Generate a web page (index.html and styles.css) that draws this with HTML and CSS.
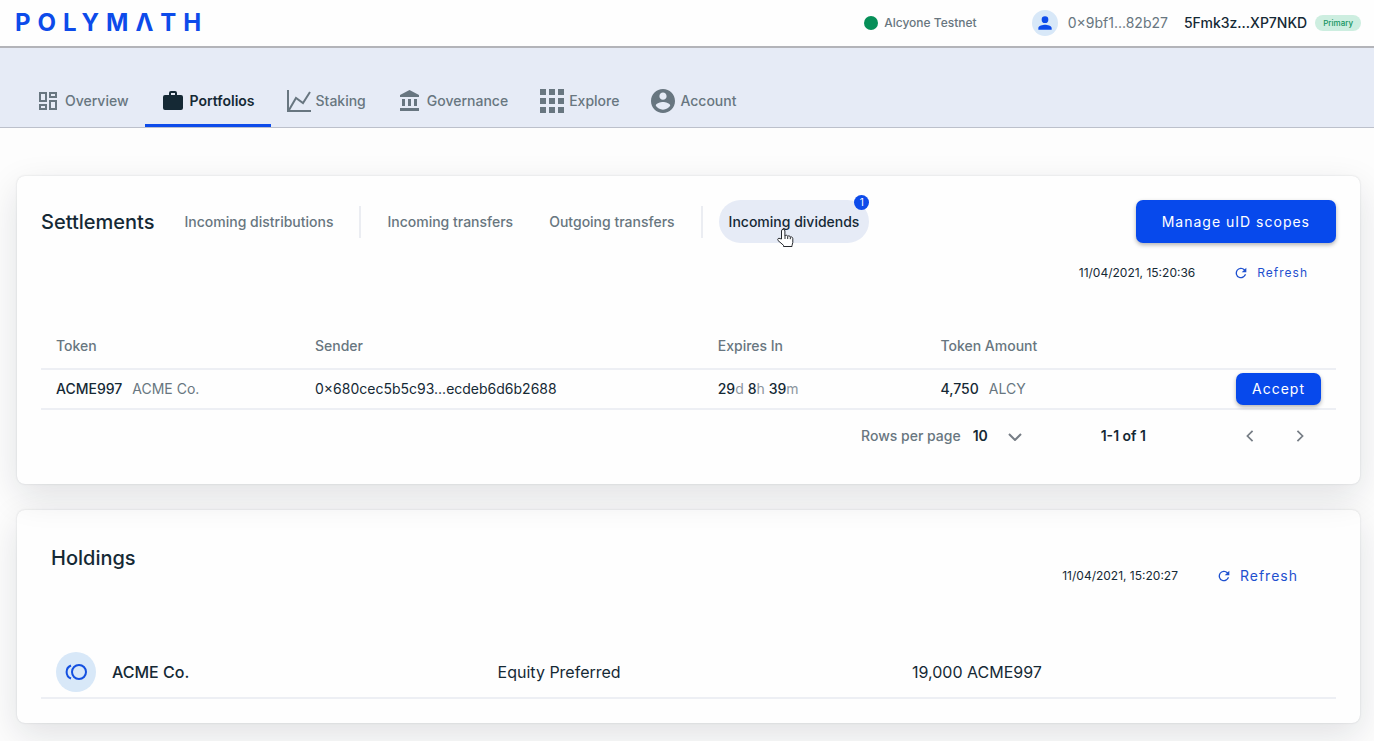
FILE: index.html
```html
<!DOCTYPE html>
<html lang="en">
<head>
<meta charset="utf-8">
<title>Polymath - Portfolios</title>
<link rel="stylesheet" href="styles.css">
</head>
<body>
<header class="topbar">
  <a class="logo" href="#" aria-label="Polymath">POLYMΛTH</a>
  <div class="network"><span class="network-dot"></span>Alcyone Testnet</div>
  <div class="identity">
    <span class="avatar"><svg viewBox="0 0 24 24" width="20" height="20"><path d="M12 4a4 4 0 1 0 0 8 4 4 0 0 0 0-8zm0 10c-2.700 0-8 1.300-8 4v2h16v-2c0-2.700-5.300-4-8-4z"/></svg></span>
    <span class="did">0×9bf1...82b27</span>
    <span class="key">5Fmk3z...XP7NKD</span>
    <span class="badge">Primary</span>
  </div>
</header>

<nav class="nav">
  <a class="nav-item" href="#"><svg viewBox="0 0 24 24"><path d="M19 5v2h-4V5h4M9 5v6H5V5h4m10 8v6h-4v-6h4M9 17v2H5v-2h4M21 3h-8v6h8V3M11 3H3v10h8V3m10 8h-8v10h8V11m-10 4H3v6h8v-6z"/></svg>Overview</a>
  <a class="nav-item active" href="#" aria-current="page"><svg viewBox="0 0 24 24"><path d="M10 2h4a2 2 0 0 1 2 2v2h4a2 2 0 0 1 2 2v11a2 2 0 0 1-2 2H4a2 2 0 0 1-2-2V8a2 2 0 0 1 2-2h4V4a2 2 0 0 1 2-2m4 4V4h-4v2h4z"/></svg>Portfolios</a>
  <a class="nav-item" href="#"><svg viewBox="0 0 24 24"><path class="stroke" d="M1 1v21h23M2 21l7-12 7 5L23 3"/></svg>Staking</a>
  <a class="nav-item" href="#"><svg viewBox="0 0 24 24"><path d="M11.500 1L2 6v2h19V6m-5 4v7h3v-7M2 22h19v-3H2m8-9v7h3v-7m-9 0v7h3v-7H4z"/></svg>Governance</a>
  <a class="nav-item" href="#"><svg viewBox="0 0 24 24"><path d="M0 0h6v6H0zM9 0h6v6H9zM18 0h6v6h-6zM0 9h6v6H0zM9 9h6v6H9zM18 9h6v6h-6zM0 18h6v6H0zM9 18h6v6H9zM18 18h6v6h-6z"/></svg>Explore</a>
  <a class="nav-item" href="#"><svg viewBox="2 2 20 20"><path d="M12 2C6.480 2 2 6.480 2 12s4.480 10 10 10 10-4.480 10-10S17.520 2 12 2zm0 3c1.660 0 3 1.340 3 3s-1.340 3-3 3-3-1.340-3-3 1.340-3 3-3zm0 14.200c-2.500 0-4.710-1.280-6-3.220.030-1.990 4-3.080 6-3.080 1.990 0 5.970 1.090 6 3.080-1.290 1.940-3.500 3.220-6 3.220z"/></svg>Account</a>
</nav>

<main class="content">
  <section class="card card-raised">
    <div class="card-head">
      <h2 class="title">Settlements</h2>
      <button class="tab" type="button">Incoming distributions</button>
      <span class="divider"></span>
      <button class="tab" type="button">Incoming transfers</button>
      <button class="tab" type="button">Outgoing transfers</button>
      <span class="divider"></span>
      <button class="tab selected" type="button">Incoming dividends<span class="count">1</span>
        <svg class="pointer" viewBox="0 0 18 20" width="18" height="20"><path d="M5.500 11V3a1.700 1.700 0 0 1 3.400 0v5c.400-1.200 2.600-1 2.800.400.600-1 2.400-.600 2.600.700 1-.600 2.500 0 2.500 1.500v3.900c0 1.200-.800 2-.800 3.200v.800H7.500v-1.200L2 12.500c-1-1.400.700-3 2-1.900z"/><path d="M9 8v3M11.700 8.500v2.500M14.300 9.200v2"/></svg>
      </button>
      <button class="primary large" type="button">Manage uID scopes</button>
    </div>
    <div class="status">
      <time>11/04/2021, 15:20:36</time>
      <button class="refresh small" type="button"><svg viewBox="0 0 24 24"><path d="M17.650 6.350A8 8 0 1 0 19.730 14h-2.080A6 6 0 1 1 12 6c1.660 0 3.140.690 4.220 1.780L13 11h7V4l-2.350 2.350z"/></svg>Refresh</button>
    </div>
    <table class="settlements">
      <thead>
        <tr><th class="col-token">Token</th><th class="col-sender">Sender</th><th class="col-expires">Expires In</th><th>Token Amount</th><td></td></tr>
      </thead>
      <tbody>
        <tr>
          <td><b>ACME997</b><span class="muted spaced">ACME Co.</span></td>
          <td>0×680cec5b5c93...ecdeb6d6b2688</td>
          <td><b>29</b><span class="unit">d</span> <b>8</b><span class="unit">h</span> <b>39</b><span class="unit">m</span></td>
          <td><b>4,750</b><span class="muted spaced">ALCY</span></td>
          <td class="action"><button class="primary" type="button">Accept</button></td>
        </tr>
      </tbody>
    </table>
    <div class="pager">
      <label for="rows">Rows per page</label>
      <span class="select"><select id="rows"><option>10</option><option>20</option></select><svg viewBox="0 0 14 8" width="14" height="8"><path d="M1 1l6 6 6-6"/></svg></span>
      <span class="range">1-1 of 1</span>
      <button class="arrow" type="button" aria-label="Previous page"><svg viewBox="0 0 8 14" width="8" height="12"><path d="M7 1L1 7l6 6"/></svg></button>
      <button class="arrow" type="button" aria-label="Next page"><svg viewBox="0 0 8 14" width="8" height="12"><path d="M1 1l6 6-6 6"/></svg></button>
    </div>
  </section>

  <section class="card">
    <div class="holdings-head">
      <h2>Holdings</h2>
      <div class="status">
        <time>11/04/2021, 15:20:27</time>
        <button class="refresh" type="button"><svg viewBox="0 0 24 24"><path d="M17.650 6.350A8 8 0 1 0 19.730 14h-2.080A6 6 0 1 1 12 6c1.660 0 3.140.690 4.220 1.780L13 11h7V4l-2.350 2.350z"/></svg>Refresh</button>
      </div>
    </div>
    <table class="holdings">
      <tbody>
        <tr>
          <td class="col-name"><div class="asset"><span class="coin"><svg viewBox="0 0 24 18" width="24" height="18"><circle cx="15" cy="9" r="7"/><path d="M7 2.500a7 7 0 0 0 0 13"/></svg></span><b>ACME Co.</b></div></td>
          <td class="col-type">Equity Preferred</td>
          <td>19,000 ACME997</td>
        </tr>
      </tbody>
    </table>
  </section>
</main>
</body>
</html>
```
FILE: styles.css
```css
* { box-sizing: border-box; }
body {
  margin: 0;
  background: #fdfdfd;
  color: #152935;
  font: 14px/20px Inter, "Liberation Sans", sans-serif;
}
h2 { margin: 0; font-size: 20px; line-height: 28px; font-weight: 500; }
b { font-weight: 500; }
button, select { font: inherit; color: inherit; border: 0; background: none; padding: 0; margin: 0; }
button { cursor: pointer; }
a { text-decoration: none; }
svg { display: block; flex: none; }

.topbar {
  display: flex;
  align-items: center;
  height: 48px;
  padding: 0 13px 0 15px;
  border-bottom: 2px solid #b3b4b9;
  background: #fefefe;
}
.logo { font-size: 24px; line-height: 28px; font-weight: 700; letter-spacing: 7px; color: #0d4bea; margin-right: auto; }
.network { display: flex; align-items: center; gap: 6px; font-size: 12px; font-weight: 500; color: #687680; margin-right: 55px; }
.network-dot { width: 14px; height: 14px; border-radius: 50%; background: #068f58; }
.identity { display: flex; align-items: center; }
.avatar { display: grid; place-items: center; width: 26px; height: 26px; border-radius: 50%; background: #d8e8f8; margin-right: 10px; }
.avatar svg { width: 20px; height: 20px; fill: #0d4bea; }
.did { color: #687680; margin-right: 16px; }
.key { font-weight: 500; margin-right: 8px; }
.badge { padding: 0 8px; border-radius: 8px; background: #cdeee0; color: #14945f; font-size: 8px; line-height: 16px; font-weight: 500; }

.nav { display: flex; height: 80px; padding: 0 20px; background: #e6ebf6; border-bottom: 1px solid #bcc0cb; }
.nav-item { display: flex; align-items: center; gap: 5px; padding: 30px 16px 0; border-bottom: 3px solid transparent; color: #687680; font-weight: 500; }
.nav-item svg { width: 24px; height: 24px; fill: currentColor; }
.nav-item .stroke { fill: none; stroke: currentColor; stroke-width: 2; }
.nav-item.active { color: #152935; border-color: #0d4bea; font-weight: 600; }

.content { display: flex; flex-direction: column; gap: 26px; padding: 48px 14px 20px 17px; overflow: hidden; }
.card {
  padding: 24px;
  border-radius: 8px;
  background: #fefefe;
  box-shadow: 0 0 2px rgba(20, 25, 40, .16), 0 12px 36px rgba(20, 25, 40, .12);
}
.card-raised { position: relative; z-index: 1; }
.card-head { display: flex; align-items: center; gap: 16px; }
.title { margin-right: 4px; }
.tab { position: relative; height: 43px; padding: 0 10px; border-radius: 22px; color: #687680; font-weight: 500; white-space: nowrap; }
.tab.selected { background: #e6ebf6; color: #152935; }
.count { position: absolute; top: -5px; right: 0; width: 15px; height: 15px; border-radius: 50%; background: #0d4bea; color: #fff; font-size: 10px; line-height: 15px; font-weight: 400; }
.pointer { position: absolute; left: 57px; top: 28px; }
.pointer path { fill: #fff; stroke: #26292e; stroke-width: 1; }
.divider { width: 2px; height: 32px; background: #ebedf2; }
.primary { height: 32px; padding: 0 16px; border-radius: 7px; background: #0749ec; color: #fff; letter-spacing: 1px; box-shadow: 0 2px 4px rgba(0, 0, 0, .3); }
.primary.large { height: 43px; padding: 0 26px; margin-left: auto; white-space: nowrap; }

.status { display: flex; align-items: center; justify-content: flex-end; padding-top: 20px; padding-right: 28px; gap: 38px; font-size: 12px; }
.refresh { display: flex; align-items: center; gap: 8px; color: #1e50cf; font-size: 14px; letter-spacing: 1px; }
.refresh svg { width: 16px; height: 16px; fill: currentColor; }
.refresh.small { font-size: 12px; }

table { width: 100%; border-collapse: collapse; table-layout: fixed; }
th, td { padding: 0 15px; text-align: left; border-bottom: 2px solid #edeff4; }
th { height: 45px; color: #687680; font-weight: 500; }
.settlements { margin-top: 41px; }
.settlements tbody td { height: 40px; white-space: nowrap; }
.col-token { width: 20%; }
.col-sender { width: 31.1%; }
.col-expires { width: 17.2%; }
.muted { color: #687680; }
.unit { color: #8c969e; }
.spaced { margin-left: 10px; }
.action { text-align: right; }

.pager { display: flex; align-items: center; justify-content: flex-end; padding: 16px 22px 14px 0; }
.pager label { color: #687680; font-weight: 500; margin-right: 12px; }
.select { position: relative; width: 50px; }
.select select { width: 100%; appearance: none; font-weight: 600; }
.select svg { position: absolute; right: 1px; top: 7px; pointer-events: none; }
.pager path { fill: none; stroke: #767d85; stroke-width: 2; }
.range { font-weight: 600; margin: 0 90px 0 78px; }
.arrow { display: grid; place-items: center; width: 28px; height: 20px; }
.arrow + .arrow { margin-left: 22px; }

.holdings-head { display: flex; justify-content: space-between; padding: 10px 10px 0; }
.holdings-head .status { padding: 22px 28px 0 0; }
.holdings { margin-top: 52px; font-size: 16px; }
.holdings td { height: 60px; padding-top: 8px; }
.col-name { width: 34.1%; }
.col-type { width: 32%; }
.asset { display: flex; align-items: center; gap: 16px; }
.coin { display: grid; place-items: center; width: 40px; height: 40px; border-radius: 50%; background: #d8e8f8; }
.coin svg * { fill: none; stroke: #1450e0; stroke-width: 2; }
```
